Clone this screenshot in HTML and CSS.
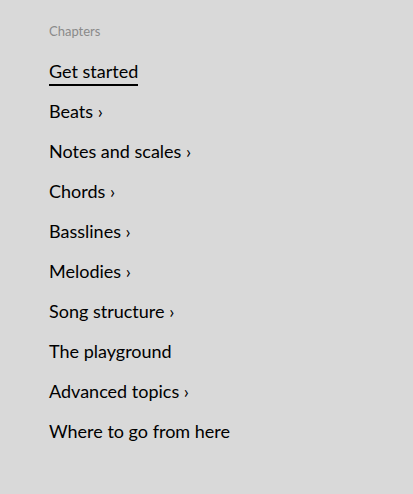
FILE: index.html
```html
<!DOCTYPE html>
<html lang="en">
<head>
<meta charset="UTF-8" />
<meta name="viewport" content="width=device-width, initial-scale=1" />
<title>Chapters</title>
<link rel="stylesheet" href="styles.css">
</head>
<body>

<nav class="chapters">
  <div class="chapters-title">Chapters</div>
  <ul class="chapter-list">
    <li><a class="chapter current" href="#">Get started</a></li>
    <li><a class="chapter" href="#">Beats <span class="more">›</span></a></li>
    <li><a class="chapter" href="#">Notes and scales <span class="more">›</span></a></li>
    <li><a class="chapter" href="#">Chords <span class="more">›</span></a></li>
    <li><a class="chapter" href="#">Basslines <span class="more">›</span></a></li>
    <li><a class="chapter" href="#">Melodies <span class="more">›</span></a></li>
    <li><a class="chapter" href="#">Song structure <span class="more">›</span></a></li>
    <li><a class="chapter" href="#">The playground</a></li>
    <li><a class="chapter" href="#">Advanced topics <span class="more">›</span></a></li>
    <li><a class="chapter" href="#">Where to go from here</a></li>
  </ul>
</nav>

</body>
</html>
```

FILE: styles.css
```css
body {
  margin: 0;
  background: #d9d9d9;
  font-family: "Lato", "Liberation Sans", sans-serif;
  color: #000;
}

.chapters {
  padding: 22px 0 0 49px;
}

.chapters-title {
  font-size: 13px;
  color: #8a8a8a;
  line-height: 18px;
  margin-bottom: 20px;
}

.chapter-list {
  list-style: none;
  margin: 0;
  padding: 0;
}

.chapter-list li {
  height: 40px;
}

.chapter {
  display: inline-block;
  font-size: 18px;
  line-height: 22px;
  color: #000;
  text-decoration: none;
}

.chapter.current {
  border-bottom: 2px solid #000;
  padding-bottom: 2px;
}

.more {
  font-size: 18px;
}
```
